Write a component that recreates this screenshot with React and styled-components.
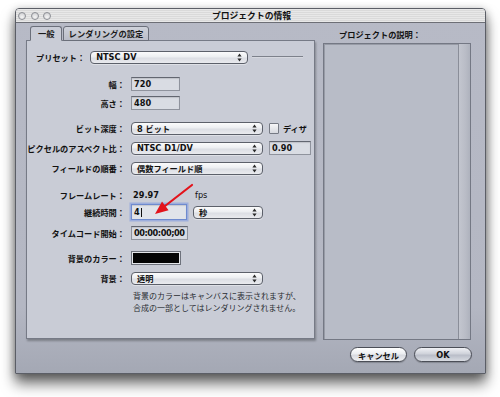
import React from 'react';
import styled, { createGlobalStyle, css } from 'styled-components';

const Global = createGlobalStyle`
  html, body { margin: 0; padding: 0; background: #fff; }
  body { font-family: "DejaVu Sans", "Noto Sans CJK JP", sans-serif; color: #111; }
  * { box-sizing: border-box; }
`;

const Page = styled.div`
  position: relative;
  width: 500px;
  height: 397px;
  padding: 8px 0 0 15px;
  overflow: hidden;
`;

const Window = styled.div`
  width: 471px;
  height: 366px;
  border: 1px solid #5b5e66;
  border-radius: 4px 4px 0 0;
  background: linear-gradient(#b7bac6 0%, #b4b7c3 82%, #a4a8b4 100%);
  box-shadow: 0 10px 14px rgba(0, 0, 0, 0.55), 0 2px 9px rgba(0, 0, 0, 0.3);
  display: flex;
  flex-direction: column;
`;

const TitleBar = styled.div`
  height: 14px;
  border-bottom: 1px solid #6d6f76;
  border-radius: 3px 3px 0 0;
  background: repeating-linear-gradient(#e8e8e8 0 1px, #dadada 1px 2px);
  display: grid;
  grid-template-columns: 1fr auto 1fr;
  align-items: center;
  padding-left: 2px;
`;

const Lights = styled.div`
  display: flex;
  gap: 4.5px;
`;

const Light = styled.span`
  width: 8px;
  height: 8px;
  border-radius: 50%;
  border: 1px solid #8d8f95;
  background: radial-gradient(circle at 50% 70%, #f4f4f4, #c9cacd);
`;

const Title = styled.div`
  font-family: "Noto Sans CJK JP", sans-serif;
  font-weight: bold;
  font-size: 8.8px;
  line-height: 13px;
  color: #111;
`;

const Main = styled.div`
  display: flex;
  gap: 8px;
  padding: 3px 14px 0 10px;
`;

const LeftCol = styled.div`
  width: 289px;
  display: flex;
  flex-direction: column;
`;

const TabBar = styled.div`
  display: flex;
  padding-left: 4px;
  height: 15px;
  margin-bottom: -1px;
  position: relative;
  z-index: 1;
`;

const Tab = styled.div`
  height: 15px;
  padding: 0 5px;
  border: 1px solid #6b6f7a;
  border-radius: 3px 3px 0 0;
  font-family: "Noto Sans CJK JP", sans-serif;
  font-weight: bold;
  font-size: 8.3px;
  line-height: 13px;
  color: #1a1a1a;
  background: ${p => (p.$active ? '#c9ccd6' : 'linear-gradient(#cfd2da, #babdc8)')};
  border-bottom-color: ${p => (p.$active ? '#c9ccd6' : '#6b6f7a')};
  margin-right: 1px;
  ${p => p.$active && css`padding: 0 6px 0 7px;`}
`;

const Panel = styled.div`
  height: 299px;
  background: #c9ccd6;
  border: 1px solid #767a86;
  box-shadow: 1px 2px 2px rgba(0, 0, 0, 0.28);
  padding-top: 9px;
  display: flex;
  flex-direction: column;
`;

const Row = styled.div`
  display: flex;
  align-items: center;
  height: 14px;
  margin-top: ${p => p.$mt || 0}px;
  padding-left: ${p => p.$pl || 0}px;
`;

const Label = styled.div`
  width: ${p => (p.$auto ? 'auto' : '98px')};
  margin-right: ${p => (p.$auto ? 5 : 6)}px;
  text-align: right;
  font-family: "Noto Sans CJK JP", sans-serif;
  font-weight: bold;
  font-size: 8.2px;
  white-space: nowrap;
  color: #111;
`;

const Popup = styled.div`
  width: ${p => p.$w}px;
  height: 13px;
  border: 1px solid #5c606a;
  border-radius: 4px;
  background: linear-gradient(#fbfbfc 0%, #eceef1 45%, #dcdee4 55%, #e9eaee 100%);
  box-shadow: 0 1px 0 rgba(255, 255, 255, 0.4);
  display: flex;
  align-items: center;
  justify-content: space-between;
  padding: 0 5px 0 5px;
  font-weight: bold;
  font-size: 8.2px;
  color: #111;
  white-space: nowrap;
`;

const Field = styled.div`
  width: ${p => p.$w}px;
  height: 14px;
  border: 1px solid #8f939d;
  border-top-color: #626670;
  background: #d9dce3;
  box-shadow: inset 0 1px 1px rgba(0, 0, 0, 0.12);
  padding-left: 2px;
  display: flex;
  align-items: center;
  font-weight: bold;
  font-size: 8.2px;
  letter-spacing: ${p => (p.$tight ? '-0.45px' : '0')};
  white-space: nowrap;
  overflow: hidden;
  color: #111;
  ${p => p.$focus && css`
    height: 16px;
    border-color: #6f8bcf;
    background: #e1e4ea;
    box-shadow: 0 0 0 1.5px rgba(120, 150, 225, 0.55), inset 0 1px 1px rgba(0, 0, 0, 0.12);
  `}
`;

const Caret = styled.span`
  width: 1px;
  height: 9px;
  background: #111;
  margin-left: 1px;
`;

const Gap = styled.span`
  width: ${p => p.$w}px;
  flex: none;
`;

const Separator = styled.div`
  width: 51px;
  height: 2px;
  margin-left: 4px;
  border-top: 1px solid #7d818b;
  border-bottom: 1px solid #d6d8df;
`;

const CheckBox = styled.span`
  width: 10px;
  height: 11px;
  border: 1px solid #767a84;
  border-radius: 1px;
  background: linear-gradient(#f6f6f8, #d7d9df);
  margin-right: 4px;
`;

const Value = styled.div`
  width: ${p => p.$w}px;
  padding-left: 2px;
  font-weight: bold;
  font-size: 8.2px;
  color: #111;
`;

const Unit = styled.div`
  font-size: 8.2px;
  color: #111;
`;

const ColorWell = styled.div`
  width: 50px;
  height: 14px;
  border: 1px solid #6e727c;
  background: #e4e6ea;
  padding: 1px;
  display: flex;
`;

const Swatch = styled.div`
  flex: 1;
  background: #050505;
`;

const Note = styled.div`
  margin-top: 5px;
  padding-left: 106px;
  font-family: "Noto Sans CJK JP", sans-serif;
  font-size: 8px;
  line-height: 11.5px;
  color: #2a2c33;
  white-space: nowrap;
`;

const RightCol = styled.div`
  width: 148px;
  display: flex;
  flex-direction: column;
`;

const RightLabel = styled.div`
  height: 17px;
  padding-left: 16px;
  padding-top: 2px;
  font-family: "Noto Sans CJK JP", sans-serif;
  font-weight: bold;
  font-size: 8.2px;
  line-height: 13px;
  color: #111;
`;

const TextArea = styled.div`
  height: 297px;
  border: 1px solid #747884;
  box-shadow: inset 1px 1px 0 #979ba6;
  background: #b8bcc7;
  display: flex;
  justify-content: flex-end;
`;

const Trough = styled.div`
  width: 12px;
  border-left: 1px solid #8a8e99;
  background: linear-gradient(90deg, #c3c6cf, #b9bcc6 60%, #aeb2bd);
`;

const Footer = styled.div`
  flex: 1;
  display: flex;
  justify-content: flex-end;
  gap: 7px;
  padding: 7px 13px 0 0;
`;

const Button = styled.div`
  width: ${p => p.$w}px;
  height: 15px;
  border: 1px solid #4b4e57;
  border-radius: 8px;
  background: ${p => (p.$default
    ? 'linear-gradient(#f0f1f5 0%, #cfd2da 45%, #b9bdc8 55%, #d8dbe2 100%)'
    : 'linear-gradient(#ffffff 0%, #eceef1 45%, #d8dae0 55%, #eeeff2 100%)')};
  box-shadow: 0 1px 1px rgba(0, 0, 0, 0.2);
  display: flex;
  align-items: center;
  justify-content: center;
  font-weight: bold;
  font-size: 8.2px;
  color: #111;
`;

const ArrowSvg = styled.svg`
  position: absolute;
  left: 150px;
  top: 180px;
  overflow: visible;
`;

const UpDown = () => (
  <svg width="5" height="9" viewBox="0 0 5 9">
    <path d="M2.5 0.5 L4.6 3.4 H0.4Z M2.5 8.5 L4.6 5.6 H0.4Z" fill="#2a2a2a" />
  </svg>
);

const Select = ({ w, children }) => (
  <Popup $w={w}>
    <span>{children}</span>
    <UpDown />
  </Popup>
);

export default function App() {
  return (
    <>
      <Global />
      <Page>
        <Window>
          <TitleBar>
            <Lights>
              <Light />
              <Light />
              <Light />
            </Lights>
            <Title>プロジェクトの情報</Title>
            <span />
          </TitleBar>
          <Main>
            <LeftCol>
              <TabBar>
                <Tab $active>一般</Tab>
                <Tab>レンダリングの設定</Tab>
              </TabBar>
              <Panel>
                <Row $pl={9}>
                  <Label $auto>プリセット：</Label>
                  <Select w={158}>NTSC DV</Select>
                  <Separator />
                </Row>
                <Row $mt={13}>
                  <Label>幅：</Label>
                  <Field $w={49}>720</Field>
                </Row>
                <Row $mt={5}>
                  <Label>高さ：</Label>
                  <Field $w={49}>480</Field>
                </Row>
                <Row $mt={11}>
                  <Label>ビット深度：</Label>
                  <Select w={132}>8 ビット</Select>
                  <Gap $w={6} />
                  <CheckBox />
                  <Label $auto>ディザ</Label>
                </Row>
                <Row $mt={6}>
                  <Label>ピクセルのアスペクト比：</Label>
                  <Select w={132}>NTSC D1/DV</Select>
                  <Gap $w={6} />
                  <Field $w={42}>0.90</Field>
                </Row>
                <Row $mt={6}>
                  <Label>フィールドの順番：</Label>
                  <Select w={132}>偶数フィールド順</Select>
                </Row>
                <Row $mt={13}>
                  <Label>フレームレート：</Label>
                  <Value $w={64}>29.97</Value>
                  <Unit>fps</Unit>
                </Row>
                <Row $mt={3}>
                  <Label>継続時間：</Label>
                  <Field $w={56} $focus>
                    4<Caret />
                  </Field>
                  <Gap $w={6} />
                  <Select w={70}>秒</Select>
                </Row>
                <Row $mt={7}>
                  <Label>タイムコード開始：</Label>
                  <Field $w={57} $tight>00:00:00;00</Field>
                </Row>
                <Row $mt={11}>
                  <Label>背景のカラー：</Label>
                  <ColorWell>
                    <Swatch />
                  </ColorWell>
                </Row>
                <Row $mt={6}>
                  <Label>背景：</Label>
                  <Select w={132}>透明</Select>
                </Row>
                <Note>
                  背景のカラーはキャンバスに表示されますが、
                  <br />
                  合成の一部としてはレンダリングされません。
                </Note>
              </Panel>
            </LeftCol>
            <RightCol>
              <RightLabel>プロジェクトの説明：</RightLabel>
              <TextArea>
                <Trough />
              </TextArea>
            </RightCol>
          </Main>
          <Footer>
            <Button $w={57}>キャンセル</Button>
            <Button $w={58} $default>OK</Button>
          </Footer>
        </Window>
        <ArrowSvg width="50" height="40" viewBox="0 0 50 40">
          <line x1="42" y1="5" x2="15" y2="26" stroke="#e3131b" strokeWidth="2.2" strokeLinecap="round" />
          <path d="M5 34 L18.6 30.2 L12 21.6 Z" fill="#e3131b" />
        </ArrowSvg>
      </Page>
    </>
  );
}
